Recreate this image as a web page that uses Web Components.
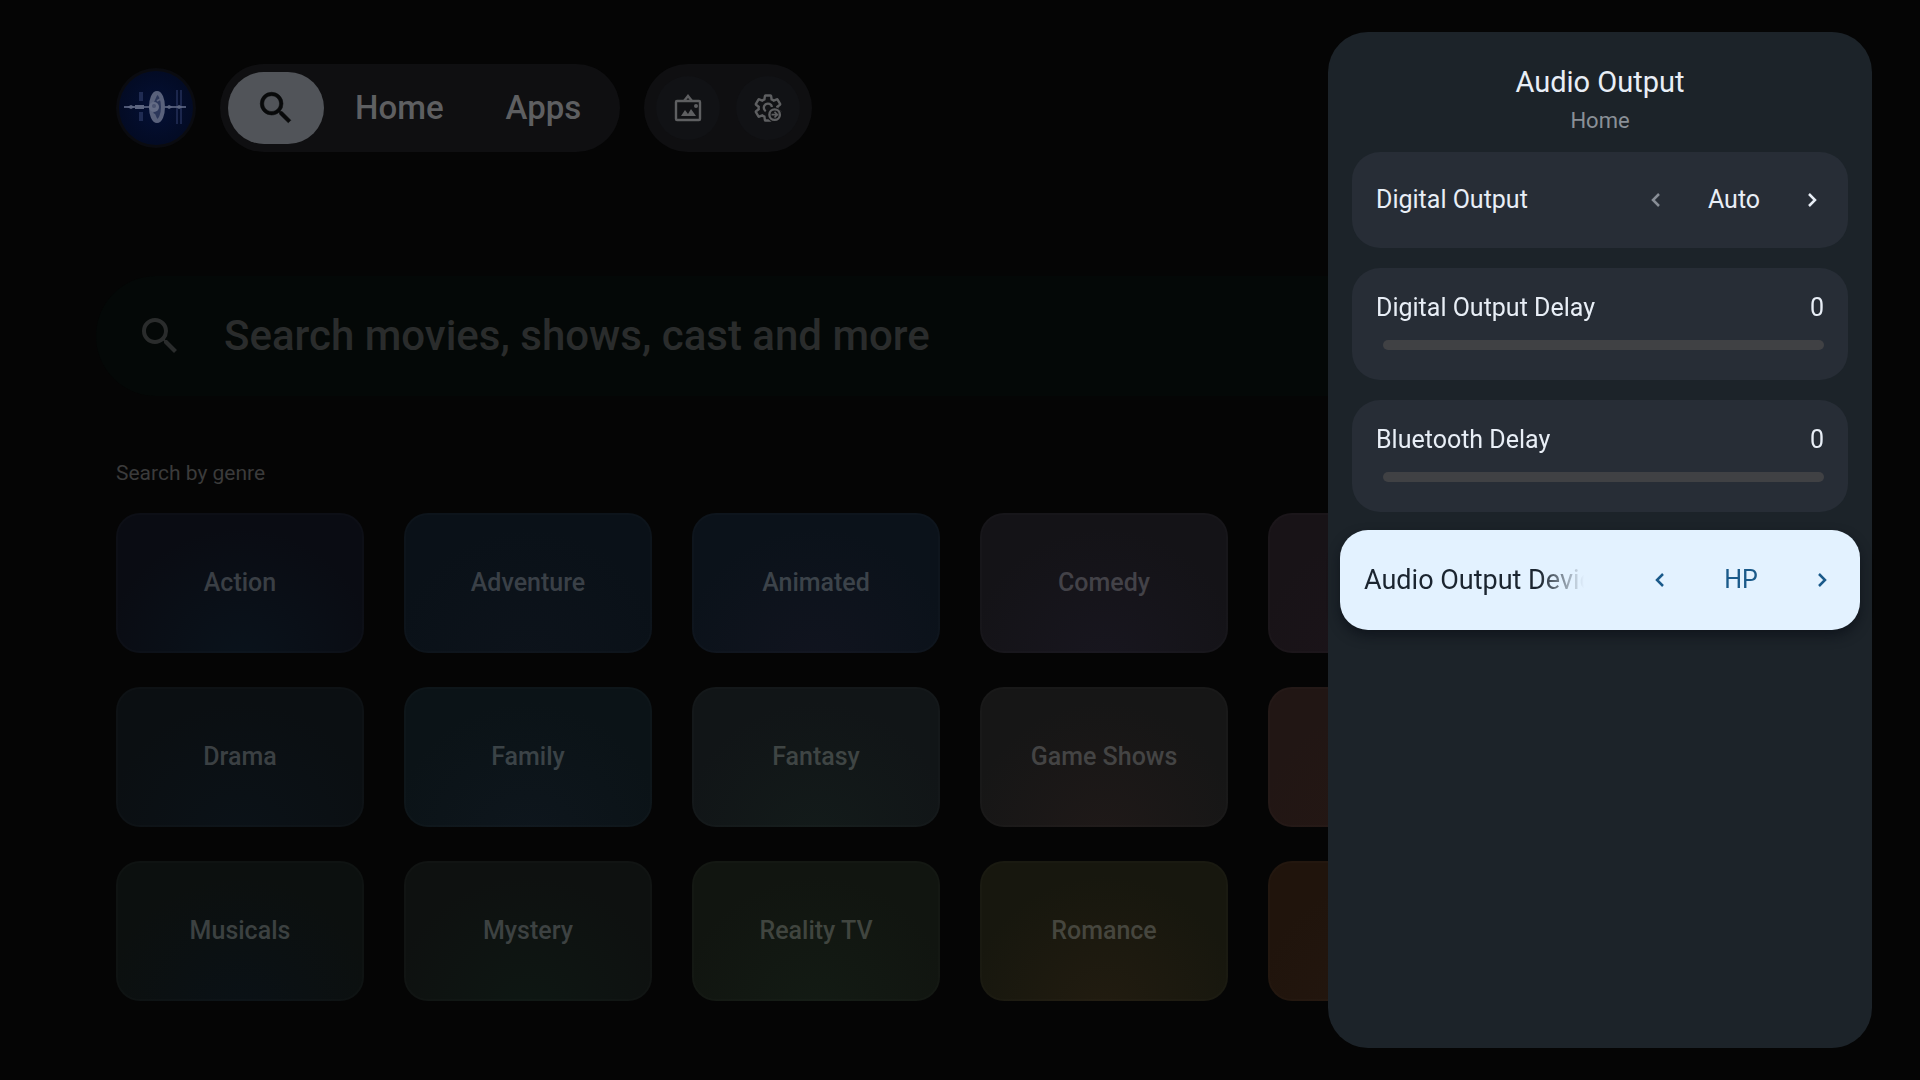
<!DOCTYPE html>
<html lang="en">
<head>
	<meta charset="utf-8">
	<title>Audio Output</title>
	<style>
		body {
			margin: 0;
			background: #050505;
			color: #e8eef6;
			font-family: Roboto, sans-serif;
		}
	</style>
</head>
<body>
<tv-home></tv-home>
<side-panel heading="Audio Output" subheading="Home">
	<choice-row label="Digital Output" value="Auto" first></choice-row>
	<slider-row label="Digital Output Delay" value="0"></slider-row>
	<slider-row label="Bluetooth Delay" value="0"></slider-row>
	<choice-row label="Audio Output Device" value="HP" focused></choice-row>
</side-panel>

<script>
	const searchPath = 'M15.5 14h-.79l-.28-.27A6.47 6.47 0 0 0 16 9.5 6.5 6.5 0 1 0 9.5 16c1.61 0 3.09-.59 4.23-1.57l.27.28v.79l5 4.99L20.49 19l-4.99-5zm-6 0C7.01 14 5 11.99 5 9.5S7.01 5 9.5 5 14 7.01 14 9.5 11.99 14 9.5 14z';
	const gearPath = 'M19.43 12.98c.04-.32.07-.64.07-.98 0-.34-.03-.66-.07-.98l2.11-1.65c.19-.15.24-.42.12-.64l-2-3.46a.5.5 0 0 0-.61-.22l-2.49 1c-.52-.4-1.08-.73-1.69-.98l-.38-2.65A.488.488 0 0 0 14 2h-4c-.25 0-.46.18-.49.42l-.38 2.65c-.61.25-1.17.59-1.69.98l-2.49-1a.566.566 0 0 0-.18-.03c-.17 0-.34.09-.43.25l-2 3.46c-.13.22-.07.49.12.64l2.11 1.65c-.04.32-.07.65-.07.98 0 .33.03.66.07.98l-2.11 1.65c-.19.15-.24.42-.12.64l2 3.46a.5.5 0 0 0 .61.22l2.49-1c.52.4 1.08.73 1.69.98l.38 2.65c.03.24.24.42.49.42h4c.25 0 .46-.18.49-.42l.38-2.65c.61-.25 1.17-.59 1.69-.98l2.49 1c.06.02.12.03.18.03.17 0 .34-.09.43-.25l2-3.46c.12-.22.07-.49-.12-.64l-2.11-1.65z';

	function attach(el, html) {
		el.attachShadow({ mode: 'open' }).innerHTML = html;
	}

	class UserAvatar extends HTMLElement {
		constructor() {
			super();
			attach(this, `
				<style>
					:host { display: block; width: 80px; height: 80px; }
					svg { display: block; width: 100%; height: 100%; }
				</style>
				<svg viewBox="0 0 80 80" role="img" aria-label="Profile">
					<defs>
						<radialGradient id="sky">
							<stop offset="0" stop-color="#041036"/>
							<stop offset="1" stop-color="#030b24"/>
						</radialGradient>
					</defs>
					<circle cx="40" cy="40" r="40" fill="#0a0b10"/>
					<circle cx="40" cy="40" r="37" fill="url(#sky)"/>
					<!-- solar panels -->
					<path d="M25 24v9M25 44v9" stroke="#1f2b52" stroke-width="4"/>
					<path d="M61 22v34M65 22v34" stroke="#1b264c" stroke-width="2"/>
					<!-- boom and modules -->
					<path d="M8 39h62" stroke="#4d5674" stroke-width="2"/>
					<path d="M11 39l4-2 4 2-4 2zM50 39l3-2 4 2-4 2zM60 39l3-2 4 2-4 2z" fill="#5c6580"/>
					<path d="M19 37h9v4h-9z" fill="#5c6580"/>
					<!-- ring with hub -->
					<ellipse cx="41" cy="39" rx="6" ry="14" fill="#2c375a" stroke="#59617b" stroke-width="4"/>
					<path d="M41 25l-4 9M38 46l3 7M41 33l5-3" stroke="#59617b" stroke-width="2"/>
					<circle cx="38" cy="39" r="5" fill="#646c85"/>
					<circle cx="38" cy="38" r="2" fill="#49526f"/>
				</svg>`);
		}
	}

	class TopNav extends HTMLElement {
		constructor() {
			super();
			attach(this, `
				<style>
					:host { display: flex; gap: 24px; align-items: center; padding: 64px 116px 0; }
					nav, .tools {
						display: flex;
						align-items: center;
						box-sizing: border-box;
						height: 88px;
						border-radius: 44px;
						background: #0f0f11;
					}
					nav { padding: 8px; }
					.tools { padding: 12px; gap: 16px; }
					button {
						display: grid;
						place-items: center;
						border: 0;
						padding: 0;
						font: inherit;
						color: #5e5f61;
						background: none;
					}
					.search {
						width: 96px;
						height: 72px;
						border-radius: 36px;
						background: #515459;
						color: #08090a;
					}
					.search svg { width: 42px; height: 42px; stroke: currentColor; stroke-width: 0.3; }
					a {
						padding: 0 31px;
						color: #5e5f61;
						font-size: 33px;
						line-height: 40px;
						font-weight: 500;
						text-decoration: none;
					}
					.tools button {
						width: 64px;
						height: 64px;
						border-radius: 50%;
						background: #111215;
					}
					.tools svg { width: 32px; height: 32px; }
					.tools svg.gear { width: 30px; height: 30px; }
				</style>
				<user-avatar></user-avatar>
				<nav>
					<button class="search" aria-label="Search">
						<svg viewBox="0 0 24 24" fill="currentColor"><path d="${searchPath}"/></svg>
					</button>
					<a href="#home">Home</a>
					<a href="#apps">Apps</a>
				</nav>
				<div class="tools">
					<button aria-label="Wallpaper">
						<svg viewBox="0 0 32 32" fill="none" stroke="currentColor" stroke-width="2.4">
							<rect x="4" y="9" width="24" height="19" rx="1"/>
							<path d="M12 9l4-5 4 5"/>
							<path d="M9 24l4-6 3 4 3-5 5 7z" fill="currentColor" stroke="none"/>
							<circle cx="24" cy="14" r="2" fill="currentColor" stroke="none"/>
						</svg>
					</button>
					<button aria-label="Settings">
						<svg class="gear" viewBox="0 0 24 24" fill="none" stroke="currentColor" stroke-width="1.9">
							<path d="${gearPath}"/>
							<path d="M10.2 14.6a3.3 3.3 0 1 1 5-3.4"/>
							<circle cx="17.3" cy="17.3" r="6" fill="#111215" stroke="none"/>
							<circle cx="17.3" cy="17.3" r="4.2"/>
							<path d="M14.8 17.3h4.4M17.2 15l2.3 2.3-2.3 2.3" stroke-width="1.4"/>
						</svg>
					</button>
				</div>`);
		}
	}

	class SearchBar extends HTMLElement {
		constructor() {
			super();
			attach(this, `
				<style>
					:host { display: block; margin: 124px 96px 0; }
					label {
						display: flex;
						align-items: center;
						gap: 40px;
						height: 120px;
						padding: 0 40px;
						border-radius: 60px;
						background: #040807;
						color: #2a2c2c;
					}
					svg { width: 48px; height: 48px; }
					input {
						flex: 1;
						min-width: 0;
						border: 0;
						padding: 0;
						background: none;
						color: inherit;
						outline: none;
						font: 500 42px/56px Roboto, sans-serif;
					}
					input::placeholder { color: #2a2c2c; opacity: 1; }
				</style>
				<label>
					<svg viewBox="0 0 24 24" fill="currentColor" aria-hidden="true"><path d="${searchPath}"/></svg>
					<input type="text" aria-label="Search" placeholder="Search movies, shows, cast and more">
				</label>`);
		}
	}

	class GenreCard extends HTMLElement {
		constructor() {
			super();
			attach(this, `
				<style>
					:host { display: grid; }
					button {
						height: 140px;
						border: 2px solid #ffffff04;
						border-radius: 24px;
						padding: 0;
						background: radial-gradient(circle at 50% 110%, var(--glow), var(--base) 70%) border-box;
						color: var(--ink, #3d4248);
						font: 500 25px/32px Roboto, sans-serif;
					}
				</style>
				<button><slot></slot></button>`);
		}
	}

	class GenreGrid extends HTMLElement {
		constructor() {
			super();
			// label, base colour, glow colour, text colour
			const genres = [
				['Action', '#0a0c13', '#0a131c', '#3a3f45'],
				['Adventure', '#0a1118', '#0d131b', '#3a4047'],
				['Animated', '#0b121a', '#11141f', '#3c434a'],
				['Comedy', '#141317', '#18161f', '#434248'],
				['', '#181317', '#1c141a', '#444'],
				['', '#181317', '#1c141a', '#444'],
				['Drama', '#0b0f12', '#0b1218', '#3b4043'],
				['Family', '#0b1317', '#0e161d', '#3b4347'],
				['Fantasy', '#111517', '#131b1a', '#3f4544'],
				['Game Shows', '#161616', '#1f1918', '#444444'],
				['', '#211614', '#251713', '#444'],
				['', '#211614', '#251713', '#444'],
				['Musicals', '#0c100f', '#0a1116', '#3c4141'],
				['Mystery', '#0e1110', '#0e1713', '#3d4242'],
				['Reality TV', '#111510', '#131b14', '#40453f'],
				['Romance', '#17170e', '#221c10', '#46463e'],
				['', '#20140c', '#24170f', '#444'],
				['', '#20140c', '#24170f', '#444']
			];
			attach(this, `
				<style>
					:host { display: block; padding: 65px 116px 32px; }
					h2 {
						margin: 0 0 28px;
						font-size: 21px;
						line-height: 24px;
						font-weight: 400;
						color: #3b3b3b;
					}
					div {
						display: grid;
						grid-template-columns: repeat(6, 1fr);
						gap: 34px 40px;
					}
				</style>
				<h2>Search by genre</h2>
				<div>${genres.map(([name, base, glow, ink]) =>
					`<genre-card style="--base: ${base}; --glow: ${glow}; --ink: ${ink}">${name}</genre-card>`).join('')}</div>`);
		}
	}

	class TvHome extends HTMLElement {
		constructor() {
			super();
			attach(this, `
				<style>
					:host { display: block; }
				</style>
				<top-nav></top-nav>
				<search-bar></search-bar>
				<genre-grid></genre-grid>`);
		}
	}

	class SidePanel extends HTMLElement {
		constructor() {
			super();
			attach(this, `
				<style>
					/* the drawer floats over the home screen */
					:host {
						position: fixed;
						top: 32px;
						right: 48px;
						bottom: 32px;
						width: 544px;
						box-sizing: border-box;
						padding: 32px 24px;
						border-radius: 40px;
						background: #1c2329;
						text-align: center;
					}
					h1 {
						margin: 0;
						font-size: 29px;
						line-height: 36px;
						font-weight: 400;
					}
					p {
						margin: 5px 0 15px;
						font-size: 22px;
						line-height: 32px;
						color: #8a9097;
					}
					.rows {
						display: flex;
						flex-direction: column;
						gap: 20px;
						text-align: left;
					}
				</style>
				<h1>${this.getAttribute('heading')}</h1>
				<p>${this.getAttribute('subheading')}</p>
				<div class="rows"><slot></slot></div>`);
		}
	}

	class ChoiceRow extends HTMLElement {
		constructor() {
			super();
			attach(this, `
				<style>
					:host {
						display: flex;
						align-items: center;
						box-sizing: border-box;
						height: 96px;
						padding: 0 20px 0 24px;
						border-radius: 28px;
						background: #272d36;
						font-size: 25px;
						line-height: 32px;
					}
					:host([focused]) {
						height: 100px;
						margin: -2px -12px;
						padding-right: 22px;
						background: #e3f2ff;
						color: #1b2530;
						box-shadow: 0 6px 12px #0a0e16a0;
					}
					.label {
						width: 220px;
						overflow: hidden;
						white-space: nowrap;
					}
					/* long names fade out at the end of the label */
					:host([focused]) .label {
						font-size: 27px;
						-webkit-mask-image: linear-gradient(to right, #000 80%, transparent);
						mask-image: linear-gradient(to right, #000 80%, transparent);
					}
					.picker {
						flex: 1;
						display: flex;
						align-items: center;
						justify-content: space-between;
						margin-left: 44px;
					}
					:host([focused]) .picker { color: #1a5a8a; margin-left: 60px; }
					button {
						display: grid;
						place-items: center;
						width: 32px;
						height: 32px;
						border: 0;
						padding: 0;
						background: none;
						color: inherit;
					}
					:host([first]) .prev { opacity: 0.5; }
					svg { width: 24px; height: 24px; fill: none; stroke: currentColor; stroke-width: 2.5; }
				</style>
				<span class="label" id="label">${this.getAttribute('label')}</span>
				<div class="picker" role="group" aria-labelledby="label">
					<button class="prev" aria-label="Previous"><svg viewBox="0 0 24 24"><path d="M15 6l-6 6 6 6"/></svg></button>
					<span>${this.getAttribute('value')}</span>
					<button class="next" aria-label="Next"><svg viewBox="0 0 24 24"><path d="M9 6l6 6-6 6"/></svg></button>
				</div>`);
		}
	}

	class SliderRow extends HTMLElement {
		constructor() {
			super();
			attach(this, `
				<style>
					:host {
						display: grid;
						grid-template-columns: 1fr auto;
						align-content: start;
						row-gap: 16px;
						box-sizing: border-box;
						height: 112px;
						padding: 24px;
						border-radius: 28px;
						background: #272d36;
						font-size: 25px;
						line-height: 32px;
					}
					input {
						grid-column: 1 / -1;
						appearance: none;
						-webkit-appearance: none;
						height: 10px;
						margin: 0 0 0 7px;
						border-radius: 5px;
						background: #404144;
					}
					input::-webkit-slider-thumb {
						-webkit-appearance: none;
						width: 0;
						height: 0;
					}
				</style>
				<label for="range">${this.getAttribute('label')}</label>
				<output for="range">${this.getAttribute('value')}</output>
				<input id="range" type="range" min="0" max="250" value="${this.getAttribute('value')}">`);
		}
	}

	customElements.define('user-avatar', UserAvatar);
	customElements.define('top-nav', TopNav);
	customElements.define('search-bar', SearchBar);
	customElements.define('genre-card', GenreCard);
	customElements.define('genre-grid', GenreGrid);
	customElements.define('tv-home', TvHome);
	customElements.define('choice-row', ChoiceRow);
	customElements.define('slider-row', SliderRow);
	customElements.define('side-panel', SidePanel);
</script>
</body>
</html>
